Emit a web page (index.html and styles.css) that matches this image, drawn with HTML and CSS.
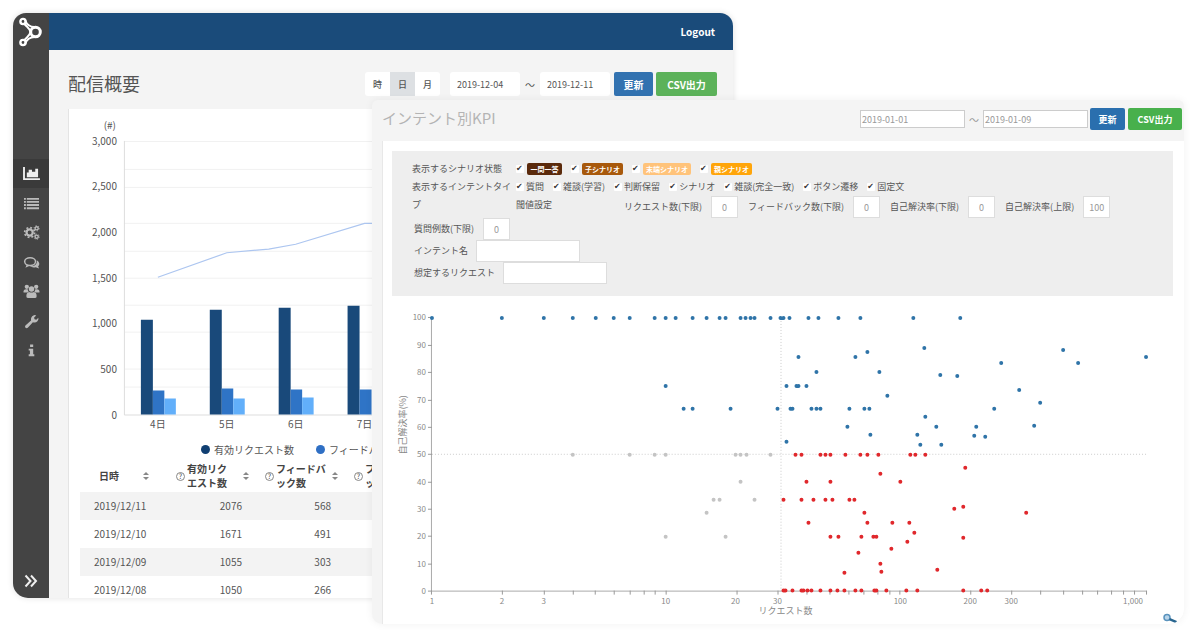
FILE: index.html
```
<!DOCTYPE html>
<html lang="ja">
<head>
<meta charset="utf-8">
<title>配信概要</title>
<link rel="stylesheet" href="styles.css">
</head>
<body>
<div class="desk">
  <section class="window overview">
    <nav class="sidebar" aria-label="メニュー">
      <a class="logo" href="#" aria-label="ホーム">
        <svg width="26" height="30" viewBox="0 0 26 30" fill="none" stroke="#fff" stroke-width="2.400">
          <circle cx="17.500" cy="15" r="4.800" stroke-width="3"/><circle cx="5" cy="4.500" r="2.600"/><circle cx="5" cy="25.500" r="2.600"/>
          <path d="M7 3c2 5 5 7 9.500 7M7 27c2-5 5-7 9.500-7M6.500 7c2.500 3 5.500 4.500 6 8-.5 3.500-3.500 5-6 8" stroke-width="2"/>
        </svg>
      </a>
      <a class="nav current" href="#" aria-label="概要"><svg viewBox="0 0 18 16"><path d="M0 1h2v12h16v2H0zM4 7h2v5H4zM6 4h3.500v8H6zM9.500 6H13v6H9.500zM13 3h3v9h-3z"/></svg></a>
      <a class="nav" href="#" aria-label="一覧"><svg viewBox="0 0 18 16"><path d="M1 2h2v2H1zM4 2h13v2H4zM1 5.300h2v2H1zM4 5.300h13v2H4zM1 8.600h2v2H1zM4 8.600h13v2H4zM1 12h2v2H1zM4 12h13v2H4z"/></svg></a>
      <a class="nav" href="#" aria-label="設定"><svg viewBox="0 0 18 16" fill="none"><g fill="none" stroke="#bbb"><circle cx="7" cy="8" r="3.300" stroke-width="2.400"/><circle cx="7" cy="8" r="5.300" stroke-width="1.800" stroke-dasharray="2 2.160"/><circle cx="14.500" cy="3.500" r="1.700" stroke-width="1.500"/><circle cx="14.500" cy="3.500" r="2.800" stroke-width="1" stroke-dasharray="1.200 1.700"/><circle cx="14.500" cy="12.500" r="1.700" stroke-width="1.500"/><circle cx="14.500" cy="12.500" r="2.800" stroke-width="1" stroke-dasharray="1.200 1.700"/></g></svg></a>
      <a class="nav" href="#" aria-label="会話"><svg viewBox="0 0 18 16"><ellipse cx="7.500" cy="7" rx="5.800" ry="4.200" fill="none" stroke="#bbb" stroke-width="1.600"/><path d="M4 10l-1.500 3.500L7 11.500zM14.500 5.500c3.500 2 3.500 5 1.500 6.500l1 2.500-3.500-1.500c-2.500.6-5 0-6-1 5 0 8-2.500 7-6.500z"/></svg></a>
      <a class="nav" href="#" aria-label="ユーザー"><svg viewBox="0 0 18 16"><circle cx="4" cy="3" r="2.300"/><circle cx="14" cy="3" r="2.300"/><circle cx="9" cy="5.300" r="2.900"/><path d="M.5 9V7.500Q1 5.500 3 5.500h2Q5 7 6 8.300L4.500 9zM17.500 9V7.500Q17 5.500 15 5.500h-2q0 1.500-1 2.800l1.500.7zM3.500 13q0-4 3-4.500 2.500 1.300 5 0 3 .5 3 4.500 0 2-2 2h-7q-2 0-2-2z"/></svg></a>
      <a class="nav" href="#" aria-label="ツール"><svg viewBox="0 0 18 16"><path d="M2.500 12.300l6-5.500Q8 3 11 1.500q1.500-.7 3 0l-2.200 2.300.4 1.800 1.900.4L16.300 4q.5 2-1 3.700-1.800 1.800-4.800 1L5 14.700q-1.300 1-2.400 0-1-1.200-.1-2.400z"/></svg></a>
      <a class="nav" href="#" aria-label="情報"><svg viewBox="0 0 18 16"><path d="M7.500 1.500h3.300v2.800H7.500zM6 6h4.800v6H12v2H6v-2h1.300V8H6z"/></svg></a>
      <a class="expand" href="#" aria-label="開く"><svg width="14" height="14" viewBox="0 0 14 14" fill="none" stroke="#eee" stroke-width="2"><path d="M1.500 1.500L6.500 7l-5 5.500M7 1.500L12 7l-5 5.500"/></svg></a>
    </nav>
    <div class="overview-main">
      <header class="topbar"><a href="#">Logout</a></header>
      <div class="overview-head">
        <h1>配信概要</h1>
        <div class="units"><button>時</button><button class="on">日</button><button>月</button></div>
        <input class="day" type="text" value="2019-12-04" aria-label="開始日">
        <span class="tilde">〜</span>
        <input class="day" type="text" value="2019-12-11" aria-label="終了日">
        <button class="btn update">更新</button>
        <button class="btn csv">CSV出力</button>
      </div>
      <div class="overview-card">
        <svg class="chart" viewBox="68 109 650 330" role="img" aria-label="リクエスト数の推移">
          <path d="M123 141.500H718M123 169.500H718M123 187.500H718M123 223.500H718M123 251.500H718M123 278.500H718M123 305.500H718M123 332.500H718M123 369.500H718M123 387.500H718" stroke="#f1f1f1"/>
          <path d="M123.500 141V415.500H718" fill="none" stroke="#ddd"/>
          <g class="ylab"><text x="115" y="129">(#)</text><text x="116" y="145">3,000</text><text x="116" y="190">2,500</text><text x="116" y="236">2,000</text><text x="116" y="282">1,500</text><text x="116" y="327">1,000</text><text x="116" y="373">500</text><text x="116" y="419">0</text></g>
          <path fill="#19497a" d="M140 320h12v95h-12zM209 310h12v105h-12zM278 308h12v107h-12zM347 306h12v109h-12z"/>
          <path fill="#2f74c6" d="M152 391h11.500v24H152zM221 389h11.500v26H221zM290 390h11.500v25H290zM359 390h12v25h-12z"/>
          <path fill="#62affa" d="M163.500 399H175v16h-11.500zM232.500 399H244v16h-11.500zM301.500 398H313v17h-11.500z"/>
          <path d="M157 277.500L226 253l42-3.700 27-4.800L364 223.500H376" fill="none" stroke="#adc6f0" stroke-width="1.200"/>
          <g class="xlab"><text x="157" y="429">4日</text><text x="226" y="429">5日</text><text x="295" y="429">6日</text><text x="364" y="429">7日</text></g>
        </svg>
        <ul class="legend"><li>有効リクエスト数</li><li class="mid">フィードバック数</li></ul>
        <table class="daily">
          <colgroup><col class="c"><col class="c"><col class="c"><col></colgroup>
          <thead><tr>
            <th><div><span>日時</span><i class="sort"></i></div></th>
            <th><div><i class="help">?</i><span>有効リクエスト数</span><i class="sort"></i></div></th>
            <th><div><i class="help">?</i><span>フィードバ<br>ック数</span><i class="sort"></i></div></th>
            <th><div><i class="help">?</i><span>フィードバ<br>ック率</span></div></th>
          </tr></thead>
          <tbody>
            <tr><td>2019/12/11</td><td>2076</td><td>568</td><td></td></tr>
            <tr><td>2019/12/10</td><td>1671</td><td>491</td><td></td></tr>
            <tr><td>2019/12/09</td><td>1055</td><td>303</td><td></td></tr>
            <tr><td>2019/12/08</td><td>1050</td><td>266</td><td></td></tr>
          </tbody>
        </table>
      </div>
    </div>
  </section>

  <section class="window intent">
    <header class="intent-head">
      <h2>インテント別KPI</h2>
      <input class="day" type="text" value="2019-01-01" aria-label="開始日">
      <span class="tilde">〜</span>
      <input class="day" type="text" value="2019-01-09" aria-label="終了日">
      <button class="btn update">更新</button>
      <button class="btn csv">CSV出力</button>
    </header>
    <div class="intent-card">
      <form class="filter">
        <div class="row">
          <span class="name">表示するシナリオ状態</span>
          <div class="checks tags">
            <label><input type="checkbox" checked><b class="tag t1">一問一答</b></label>
            <label><input type="checkbox" checked><b class="tag t2">子シナリオ</b></label>
            <label><input type="checkbox" checked><b class="tag t3">末端シナリオ</b></label>
            <label><input type="checkbox" checked><b class="tag t4">親シナリオ</b></label>
          </div>
        </div>
        <div class="row">
          <span class="name">表示するインテントタイプ</span>
          <div>
            <div class="checks">
              <label><input type="checkbox" checked>質問</label>
              <label><input type="checkbox" checked>雑談(学習)</label>
              <label><input type="checkbox" checked>判断保留</label>
              <label><input type="checkbox" checked>シナリオ</label>
              <label><input type="checkbox" checked>雑談(完全一致)</label>
              <label><input type="checkbox" checked>ボタン遷移</label>
              <label><input type="checkbox" checked>固定文</label>
            </div>
            <div class="limits">
              <span class="limit-name">閾値設定</span>
              <label>リクエスト数(下限)<input type="text" value="0"></label>
              <label>フィードバック数(下限)<input type="text" value="0"></label>
              <label>自己解決率(下限)<input type="text" value="0"></label>
              <label>自己解決率(上限)<input type="text" value="100"></label>
            </div>
          </div>
        </div>
        <label class="line">質問例数(下限)<input type="text" value="0"></label>
        <label class="line wide">インテント名<input type="text"></label>
        <label class="line wide">想定するリクエスト<input type="text"></label>
      </form>
      <svg class="scatter" viewBox="382 296 802 327" role="img" aria-label="リクエスト数と自己解決率">
        <path d="M431 454.500H1146M780.500 318V591" stroke="#ccc" stroke-dasharray="1 2"/>
        <path d="M430.500 317V591.500H1146.500" fill="none" stroke="#aaa"/>
        <path d="M427 317.500h4M427 345.500h4M427 372.500h4M427 400.500h4M427 427.500h4M427 454.500h4M427 482.500h4M427 509.500h4M427 536.500h4M427 564.500h4M427 591.500h4M430.500 591v4M501.500 591v4M543.500 591v4M572.500 591v4M594.500 591v4M613.500 591v4M629.500 591v4M643.500 591v4M654.500 591v4M665.500 591v4M736.500 591v4M777.500 591v4M806.500 591v4M829.500 591v4M848.500 591v4M863.500 591v4M877.500 591v4M889.500 591v4M899.500 591v4M970.500 591v4M1011.500 591v4M1040.500 591v4M1063.500 591v4M1082.500 591v4M1097.500 591v4M1111.500 591v4M1123.500 591v4M1134.500 591v4M1146.500 591v4" stroke="#999"/>
        <g class="sy"><text x="425" y="320">100</text><text x="425" y="348">90</text><text x="425" y="375">80</text><text x="425" y="403">70</text><text x="425" y="430">60</text><text x="425" y="457">50</text><text x="425" y="485">40</text><text x="425" y="512">30</text><text x="425" y="539">20</text><text x="425" y="567">10</text><text x="425" y="594">0</text></g>
        <g class="sx"><text x="431" y="604">1</text><text x="501" y="604">2</text><text x="543" y="604">3</text><text x="665" y="604">10</text><text x="735" y="604">20</text><text x="777" y="604">30</text><text x="900" y="604">100</text><text x="970" y="604">200</text><text x="1011" y="604">300</text><text x="1133" y="604">1,000</text></g>
        <text class="axis" x="785" y="614">リクエスト数</text>
        <text class="axis" transform="translate(405 425) rotate(-90)">自己解決率(%)</text>
        <path class="dots" stroke="#c4c4c4" d="M572 455h0M629 455h0M654 455h0M665 455h0M735 455h0M740 455h0M746 455h0M770 455h0M740 482h0M713 500h0M719 500h0M754 500h0M706 513h0M665 537h0M725 537h0"/>
        <path class="dots" stroke="#2f74a8" d="M431 318h0M501 318h0M543 318h0M572 318h0M595 318h0M613 318h0M629 318h0M654 318h0M665 318h0M675 318h0M692 318h0M706 318h0M719 318h0M725 318h0M740 318h0M745 318h0M750 318h0M754 318h0M770 318h0M780 318h0M783 318h0M789 318h0M808 318h0M818 318h0M838 318h0M860 318h0M913 318h0M960 318h0M665 386h0M683 409h0M692 409h0M730 409h0M777 409h0M786 386h0M786 442h0M798 357h0M855 357h0M867 352h0M924 348h0M816 372h0M879 372h0M940 375h0M957 376h0M1001 363h0M1063 350h0M1078 363h0M1146 357h0M796 386h0M798 386h0M806 386h0M887 396h0M1019 390h0M1040 403h0M790 409h0M792 409h0M811 409h0M816 409h0M820 409h0M849 409h0M864 409h0M869 409h0M994 409h0M925 417h0M847 427h0M936 427h0M976 427h0M1034 426h0M870 435h0M917 435h0M920 445h0M941 445h0M974 436h0M985 437h0"/>
        <path class="dots" stroke="#e0282c" d="M795 455h0M801 455h0M820 455h0M825 455h0M830 455h0M845 455h0M860 455h0M867 455h0M878 455h0M910 455h0M915 455h0M925 455h0M965 468h0M880 474h0M806 482h0M830 482h0M900 482h0M783 500h0M801 500h0M813 500h0M825 500h0M832 500h0M849 500h0M854 500h0M954 509h0M963 507h0M864 513h0M1026 513h0M808 523h0M867 523h0M892 523h0M909 523h0M914 533h0M830 537h0M838 537h0M861 537h0M873 537h0M876 537h0M907 542h0M963 538h0M891 549h0M858 553h0M880 564h0M881 572h0M844 573h0M937 570h0M783 591h0M785 591h0M792 591h0M801 591h0M803 591h0M807 591h0M811 591h0M820 591h0M830 591h0M837 591h0M844 591h0M855 591h0M861 591h0M874 591h0M876 591h0M886 591h0M906 591h0M917 591h0M963 591h0M981 591h0M987 591h0"/>
        <circle cx="1167" cy="618" r="3" fill="#b9d5ea" stroke="#5a93bd" stroke-width="1.500"/><path d="M1169.500 619.500l7 3" stroke="#28658f" stroke-width="2.500"/>
      </svg>
    </div>
  </section>
</div>
</body>
</html>
```
FILE: styles.css
```
* { box-sizing: border-box; }
body {
  margin: 0;
  background: #fff;
  color: #555;
  font-family: "Noto Sans CJK JP", "Noto Sans", sans-serif;
  font-size: 10px;
}
button, input { font: inherit; color: inherit; }
a { color: inherit; text-decoration: none; }
h1, h2 { margin: 0; font-weight: 400; }

/* Two overlapping windows share one grid */
.desk {
  display: grid;
  grid-template-columns: 359fr 361fr 451fr;
  grid-template-rows: 87px 1fr 26px;
  min-height: 100vh;
  padding: 13px 16px 14px 13px;
}
.window { min-width: 0; overflow: hidden; }
.overview {
  grid-area: 1 / 1 / 3 / 3;
  contain: size;
  display: flex;
  border-radius: 13px 13px 0 15px;
  background: #f4f4f4;
  box-shadow: 0 0 6px rgba(0, 0, 0, .12);
}
.intent {
  grid-area: 2 / 2 / 4 / 4;
  display: flex;
  flex-direction: column;
  border-radius: 6px 6px 15px 10px;
  background: #f4f4f4;
  box-shadow: 0 0 8px rgba(0, 0, 0, .06);
}

.sidebar {
  flex: none;
  display: flex;
  flex-direction: column;
  width: 36px;
  background: #444;
}
.logo { height: 146px; padding: 4px 0 0 5px; }
.nav {
  display: flex;
  align-items: center;
  justify-content: center;
  height: 29px;
  margin-bottom: 1px;
}
.nav:nth-child(odd) { margin-bottom: 0; }
.nav.current { background: #3a3a3a; }
.nav svg { width: 17px; height: 15px; fill: #bbb; }
.nav.current svg { fill: #eee; }
.expand { margin: auto 0 7px; text-align: center; line-height: 14px; }

.overview-main { flex: 1; min-width: 0; }
.topbar {
  display: flex;
  align-items: center;
  justify-content: flex-end;
  height: 37px;
  padding-right: 18px;
  background: #1a4b7a;
  color: #fff;
  font-size: 10px;
  font-weight: 700;
}
.overview-head {
  display: flex;
  align-items: center;
  height: 59px;
  padding: 9px 16px 0 19px;
}
h1 { margin-right: auto; font-size: 18px; line-height: 20px; padding-bottom: 2px; }
.units { display: flex; border-radius: 3px; background: #fff; }
.units button {
  width: 25px;
  height: 24px;
  padding: 0;
  border: 0;
  background: none;
  font-size: 9px;
  font-weight: 500;
}
.units .on { background: #dde0e3; }
.day { min-width: 0; border: 0; background: #fff; }
.overview-head .day {
  width: 70px;
  height: 24px;
  margin-left: 10px;
  padding: 0 0 0 7px;
  font-size: 9px;
  border-radius: 3px;
}
.tilde { width: 20px; text-align: center; }
.overview-head .tilde + .day { margin-left: 0; }
.btn {
  height: 24px;
  padding: 0;
  border: 0;
  border-radius: 2px;
  color: #fff;
  font-weight: 700;
  white-space: nowrap;
}
.update { width: 39px; margin-left: 4px; background: #3272b0; }
.csv { width: 61px; margin-left: 3px; background: #5cb25a; }

.overview-card {
  margin: 0 15px 0 19px;
  border-left: 1px solid #e4e4e4;
  background: #fff;
}
.chart, .scatter { display: block; width: 100%; height: auto; }
.chart text { fill: #555; }
.ylab { font-size: 10px; text-anchor: end; }
.xlab { font-size: 10px; text-anchor: middle; }
.legend {
  display: flex;
  gap: 22px;
  height: 22px;
  margin: 0;
  padding: 0 0 0 132px;
  list-style: none;
  align-items: center;
  white-space: nowrap;
}
.legend li { display: flex; align-items: center; gap: 4px; }
.legend li::before {
  content: "";
  width: 9px;
  height: 9px;
  border-radius: 50%;
  background: #103f72;
}
.legend .mid::before { background: #2f6fc4; }

.daily {
  width: calc(100% - 24px);
  margin-left: 11px;
  border-collapse: collapse;
  table-layout: fixed;
}
.daily .c { width: 89px; }
.daily th { height: 32px; padding: 0; font-weight: 700; line-height: 14px; text-align: left; color: #444; }
.daily th div { display: flex; align-items: center; gap: 2px; padding: 0 9px 0 7px; }
.daily th:first-child div { padding: 0 20px 0 19px; justify-content: space-between; }
.daily th span { flex: none; width: 50px; padding-right: 8px; white-space: normal; }
.daily th br { line-height: 14px; }
.daily th:nth-child(n+3) span { padding-right: 0; white-space: nowrap; }
.daily th:first-child span { width: auto; padding: 0; }
.daily th .sort { margin-left: auto; }
.help {
  flex: none;
  width: 9px;
  height: 9px;
  border: 1px solid #888;
  border-radius: 50%;
  font-size: 7px;
  font-style: normal;
  font-weight: 400;
  line-height: 7px;
  text-align: center;
}
.sort { display: grid; gap: 2px; }
.sort::before, .sort::after { content: ""; border: 3px solid transparent; }
.sort::before { border-top: 0; border-bottom-color: #888; }
.sort::after { border-bottom: 0; border-top-color: #888; }
.daily td { height: 28px; padding: 0 16px 0 0; text-align: right; line-height: 14px; }
.daily td:first-child { padding: 0 0 0 14px; text-align: left; }
.daily tbody tr:nth-child(odd) { background: #f3f3f3; }

.intent-head {
  display: flex;
  align-items: center;
  height: 41px;
  padding: 0 2px 3px 10px;
}
h2 { margin-right: auto; color: #b4b4b4; font-size: 15px; line-height: 20px; padding-bottom: 2px; }
.intent-head .day {
  width: 105px;
  height: 18px;
  padding: 0 1px;
  border: 1px solid #ccc;
  color: #999;
  font-size: 9px;
}
.intent-head .tilde { width: 18px; color: #999; }
.intent-head .btn { height: 22px; font-size: 9px; }
.intent-head .update { width: 35px; margin-left: 2px; background: #2a6fae; }
.intent-head .csv { width: 54px; background: #48b04c; }
.intent-card {
  flex: 1;
  margin-left: 10px;
  border-left: 1px solid #e8e8e8;
  background: #fff;
}
.filter {
  margin: 10px 11px 0 9px;
  padding: 9px 20px 12px;
  background: #eee;
  font-size: 9px;
  line-height: 18px;
}
.row { display: grid; grid-template-columns: 100px 1fr; column-gap: 4px; }
.checks { display: flex; flex-wrap: wrap; gap: 0 9px; }
.checks label { display: flex; align-items: center; gap: 2px; white-space: nowrap; }
.checks input { appearance: none; width: 8px; height: 8px; margin: 0; background: #fff; border-radius: 1px; }
.checks input:checked::before {
  content: "✔";
  display: block;
  color: #333;
  font: 8px/8px "DejaVu Sans", sans-serif;
}
.tag {
  min-width: 35px;
  height: 12px;
  margin-left: 1px;
  padding: 0 3px;
  border-radius: 2px;
  color: #fff;
  font-size: 7px;
  line-height: 12px;
  text-align: center;
}
.t1 { background: #5a2a0c; }
.t2 { background: #a8590c; }
.t3 { background: #ffc37a; }
.t4 { background: #ffa50a; }
.limits { display: flex; flex-wrap: wrap; column-gap: 10px; }
.limit-name { width: 98px; }
.limits label, .line { display: flex; align-items: center; gap: 9px; white-space: nowrap; }
.limits input, .line input {
  width: 27px;
  height: 22px;
  padding: 0;
  border: 1px solid #ddd;
  background: #fff;
  color: #999;
  text-align: center;
}
.line { padding-left: 2px; }
.line.wide { gap: 8px; }
.wide input { width: 104px; }
.scatter text { fill: #888; font-size: 8px; }
.sy { text-anchor: end; }
.sx { text-anchor: middle; }
.scatter .axis { font-size: 9px; text-anchor: middle; }
.dots { stroke-width: 4; stroke-linecap: round; }
```
